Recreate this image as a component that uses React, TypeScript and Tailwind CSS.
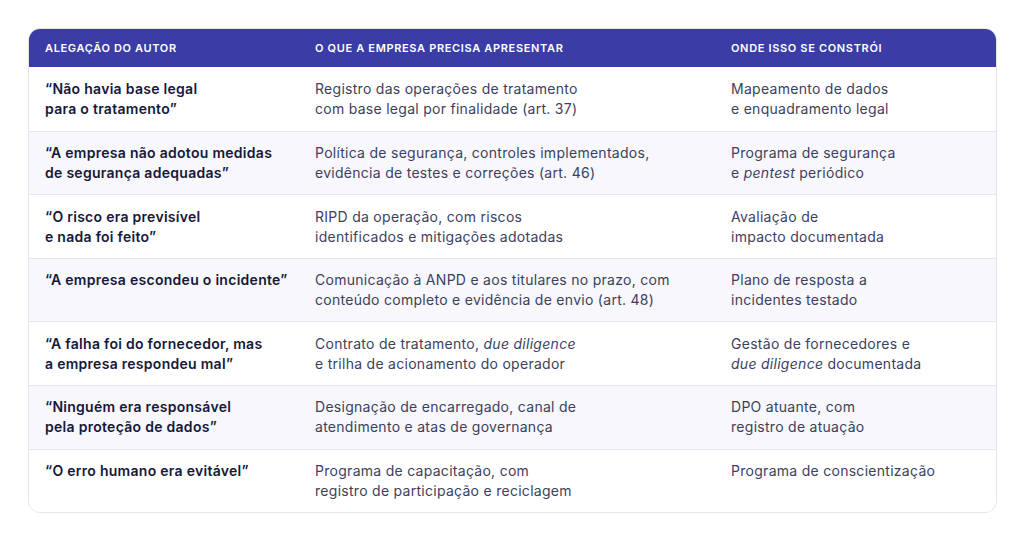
import React from "react";

type Row = { a: React.ReactNode; b: React.ReactNode; c: React.ReactNode };

const rows: Row[] = [
  {
    a: (<>“Não havia base legal<br />para o tratamento”</>),
    b: (<>Registro das operações de tratamento<br />com base legal por finalidade (art. 37)</>),
    c: (<>Mapeamento de dados<br />e enquadramento legal</>),
  },
  {
    a: (<>“A empresa não adotou medidas<br />de segurança adequadas”</>),
    b: (<>Política de segurança, controles implementados,<br />evidência de testes e correções (art. 46)</>),
    c: (<>Programa de segurança<br />e <i>pentest</i> periódico</>),
  },
  {
    a: (<>“O risco era previsível<br />e nada foi feito”</>),
    b: (<>RIPD da operação, com riscos<br />identificados e mitigações adotadas</>),
    c: (<>Avaliação de<br />impacto documentada</>),
  },
  {
    a: (<>“A empresa escondeu o incidente”</>),
    b: (<>Comunicação à ANPD e aos titulares no prazo, com<br />conteúdo completo e evidência de envio (art. 48)</>),
    c: (<>Plano de resposta a<br />incidentes testado</>),
  },
  {
    a: (<>“A falha foi do fornecedor, mas<br />a empresa respondeu mal”</>),
    b: (<>Contrato de tratamento, <i>due diligence</i><br />e trilha de acionamento do operador</>),
    c: (<>Gestão de fornecedores e<br /><i>due diligence</i> documentada</>),
  },
  {
    a: (<>“Ninguém era responsável<br />pela proteção de dados”</>),
    b: (<>Designação de encarregado, canal de<br />atendimento e atas de governança</>),
    c: (<>DPO atuante, com<br />registro de atuação</>),
  },
  {
    a: (<>“O erro humano era evitável”</>),
    b: (<>Programa de capacitação, com<br />registro de participação e reciclagem</>),
    c: (<>Programa de conscientização</>),
  },
];

export default function App() {
  return (
    <div
      className="w-[1024px] h-[541px] bg-white pt-[28px] pl-[28px]"
      style={{ fontFamily: "Inter, 'Open Sans', sans-serif" }}
    >
      <div className="w-[969px] rounded-[12px] border border-[#e4e4ec] overflow-hidden">
        <div className="grid grid-cols-[270px_416px_1fr] bg-[#3b3ca6] h-[38px] items-center text-white text-[11px] font-semibold tracking-[0.06em] uppercase">
          <div className="pl-[16px]">ALEGAÇÃO DO AUTOR</div>
          <div className="pl-[16px]">O QUE A EMPRESA PRECISA APRESENTAR</div>
          <div className="pl-[16px]">ONDE ISSO SE CONSTRÓI</div>
        </div>
        {rows.map((r, i) => (
          <div
            key={i}
            className={`grid grid-cols-[270px_416px_1fr] ${i % 2 === 1 ? "bg-[#f7f7fc]" : "bg-white"} ${i > 0 ? "border-t border-[#e6e6ee]" : ""} h-[63.6px] pt-[11.5px] text-[14px] leading-[20px] tracking-[0.02em]`}
          >
            <div className="pl-[16px] font-semibold text-[#16183a]">{r.a}</div>
            <div className="pl-[16px] text-[#3c3f5e]">{r.b}</div>
            <div className="pl-[16px] text-[#3c3f5e]">{r.c}</div>
          </div>
        ))}
      </div>
    </div>
  );
}
